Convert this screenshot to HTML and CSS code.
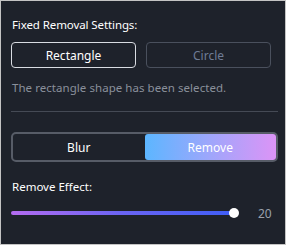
FILE: index.html
```
<!DOCTYPE html>
<html>
<head>
<meta charset="utf-8">
<link rel="stylesheet" href="styles.css">
</head>
<body>
<div class="panel">
  <div class="title">Fixed Removal Settings:</div>
  <div class="shapes">
    <div class="shape active">Rectangle</div>
    <div class="shape">Circle</div>
  </div>
  <div class="hint">The rectangle shape has been selected.</div>
  <div class="divider"></div>
  <div class="seg">
    <div class="seg-item">Blur</div>
    <div class="seg-item on">Remove</div>
  </div>
  <div class="label">Remove Effect:</div>
  <div class="slider-row">
    <div class="track">
      <div class="fill"></div>
      <div class="thumb"></div>
    </div>
    <div class="value">20</div>
  </div>
</div>
</body>
</html>
```
FILE: styles.css
```
html, body {
  margin: 0;
  padding: 0;
  background: #1e222b;
}
.panel {
  box-sizing: border-box;
  width: 286px;
  height: 245px;
  border: 1px solid #c4c4c4;
  background: #1e222b;
  padding: 16px 7px 0 10px;
  font-family: "Noto Sans", sans-serif;
  font-size: 11.5px;
  color: #ffffff;
  display: flex;
  flex-direction: column;
}
.title {
  line-height: 16px;
  padding-left: 1px;
  letter-spacing: -0.1px;
}
.shapes {
  display: flex;
  gap: 10px;
  margin-top: 9px;
  padding-right: 7px;
}
.shape {
  flex: 1;
  height: 26px;
  box-sizing: border-box;
  border: 1px solid #4a505d;
  border-radius: 4px;
  display: flex;
  align-items: center;
  justify-content: center;
  color: #6f7c96;
  font-size: 12px;
}
.shape.active {
  border-color: #d9dce2;
  color: #ffffff;
}
.hint {
  margin-top: 12px;
  line-height: 16px;
  color: #8a909b;
  padding-left: 1px;
  letter-spacing: 0.05px;
}
.divider {
  height: 1px;
  background: #454a55;
  margin-top: 15px;
}
.seg {
  margin-top: 20px;
  height: 30px;
  box-sizing: border-box;
  border: 2px solid #575c67;
  border-radius: 5px;
  display: flex;
}
.seg-item {
  flex: 1;
  display: flex;
  align-items: center;
  justify-content: center;
  font-size: 12px;
}
.seg-item.on {
  border-radius: 3px;
  background: linear-gradient(90deg, #5cb6ff 0%, #9fa6fb 50%, #dc94f6 100%);
}
.label {
  margin-top: 17px;
  line-height: 16px;
  padding-left: 1px;
}
.slider-row {
  display: flex;
  align-items: center;
  margin-top: 10px;
  height: 16px;
}
.track {
  position: relative;
  width: 223px;
  height: 4px;
  border-radius: 2px;
  background: linear-gradient(90deg, #b46cf0 0%, #6a64f3 50%, #3f5ef6 100%);
}
.thumb {
  position: absolute;
  right: -5px;
  top: -3px;
  width: 10px;
  height: 10px;
  border-radius: 50%;
  background: #ffffff;
}
.value {
  margin-left: 24px;
  color: #9aa0ab;
  font-size: 12px;
}
```
